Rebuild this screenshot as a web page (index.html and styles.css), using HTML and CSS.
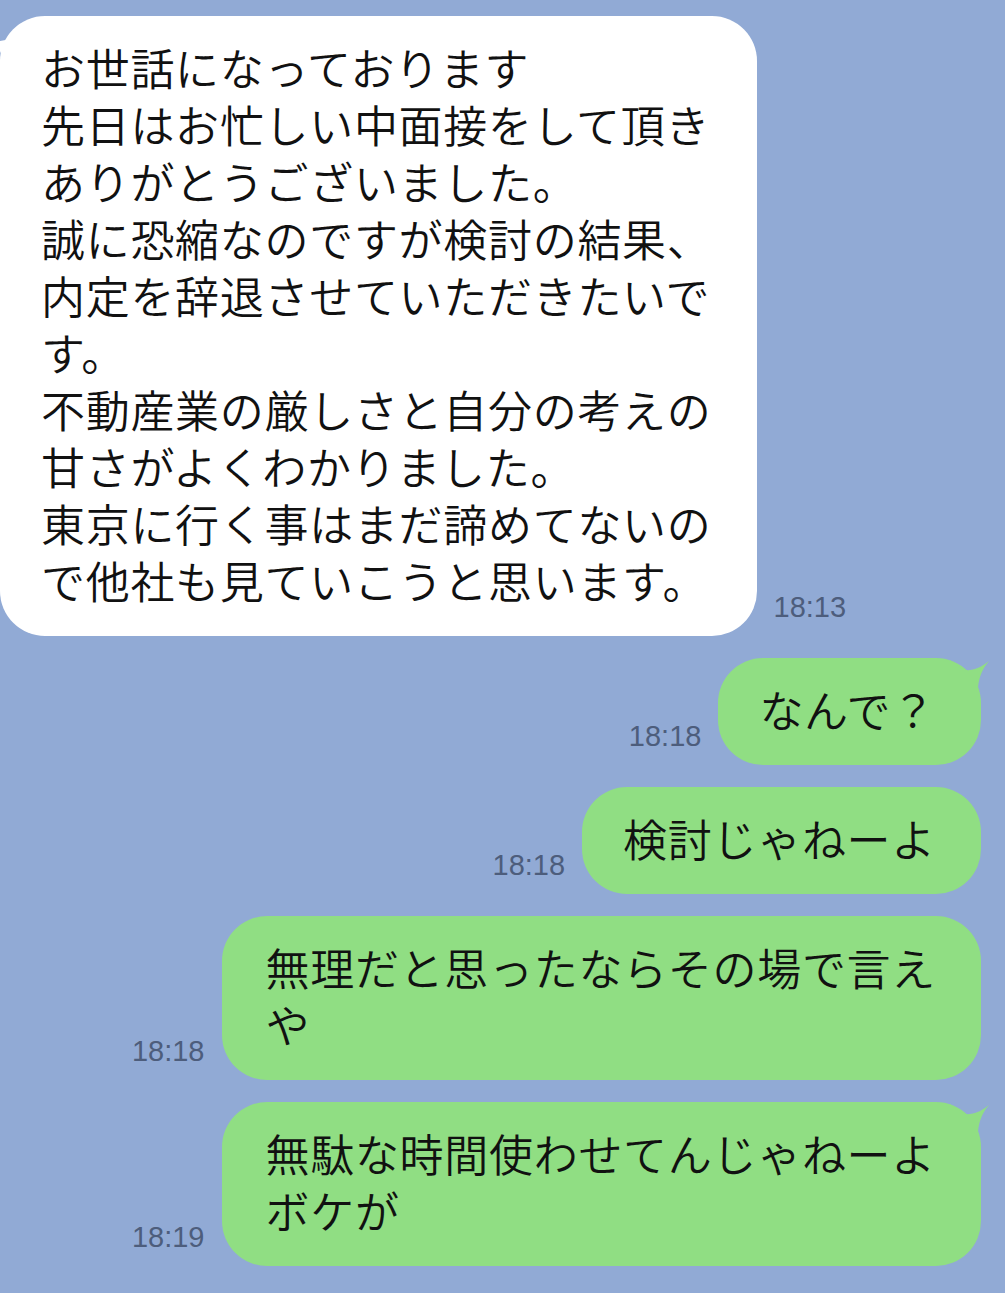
FILE: index.html
```html
<!DOCTYPE html>
<html lang="ja">
<head>
  <meta charset="UTF-8" />
  <meta name="viewport" content="width=device-width, initial-scale=1.0" />
  <title>トーク</title>
  <link rel="stylesheet" href="styles.css">
</head>
<body>
  <div class="chat">

    <!-- received -->
    <div class="row in">
      <div class="bubble white">
        <svg class="tail tail-left" width="60" height="60" viewBox="0 0 60 60">
          <path d="M55,16 Q30,16 20,22 Q12,27 2,24 Q10,32 13.3,44 L55,44 Z" fill="#ffffff" />
        </svg>
        お世話になっております<br>
        先日はお忙しい中面接をして頂き<br>
        ありがとうございました。<br>
        誠に恐縮なのですが検討の結果、<br>
        内定を辞退させていただきたいで<br>
        す。<br>
        不動産業の厳しさと自分の考えの<br>
        甘さがよくわかりました。<br>
        東京に行く事はまだ諦めてないの<br>
        で他社も見ていこうと思います。
      </div>
      <span class="time">18:13</span>
    </div>

    <!-- sent -->
    <div class="row out">
      <span class="time">18:18</span>
      <div class="bubble green">
        なんで？
        <svg class="tail tail-right" width="40" height="40" viewBox="0 0 40 40">
          <path d="M0,2 C8,8 14,13 20,12 C28,11 34,7 39,3 C33,10 29,18 28,30 L0,30 Z" fill="#90de83" />
        </svg>
      </div>
    </div>

    <div class="row out">
      <span class="time">18:18</span>
      <div class="bubble green">検討じゃねーよ</div>
    </div>

    <div class="row out">
      <span class="time">18:18</span>
      <div class="bubble green wide">無理だと思ったならその場で言え<br>や</div>
    </div>

    <div class="row out">
      <span class="time">18:19</span>
      <div class="bubble green wide">
        無駄な時間使わせてんじゃねーよ<br>ボケが
        <svg class="tail tail-right" width="40" height="40" viewBox="0 0 40 40">
          <path d="M0,2 C8,8 14,13 20,12 C28,11 34,7 39,3 C33,10 29,18 28,30 L0,30 Z" fill="#90de83" />
        </svg>
      </div>
    </div>

  </div>
</body>
</html>
```

FILE: styles.css
```css
body {
  margin: 0;
  padding: 0;
  background-color: #91aad5;
  font-family: "Noto Sans CJK JP", "Noto Sans", sans-serif;
  color: #111111;
  min-height: 100vh;
  overflow: hidden;
}

.chat {
  display: flex;
  flex-direction: column;
  gap: 22px;
  padding-top: 16px;
}

.row {
  display: flex;
  align-items: flex-end;
  gap: 17px;
}

.row.out {
  justify-content: flex-end;
  padding-right: 24px;
}

.bubble {
  position: relative;
  font-size: 44px;
  font-weight: 350;
  line-height: 57px;
  letter-spacing: 0.7px;
  padding: 23px 45px 27px 41px;
  border-radius: 45px;
  white-space: nowrap;
}

.bubble.white {
  background-color: #ffffff;
}

.bubble.green {
  background-color: #90de83;
}

.bubble.wide {
  padding-left: 44px;
}

.tail {
  position: absolute;
  top: 0;
  display: block;
}

.tail-right {
  right: -9px;
}

.tail-left {
  left: -10px;
}

.time {
  font-family: "Liberation Sans", Arial, sans-serif;
  font-size: 29px;
  line-height: 1;
  color: #4d5d7c;
  margin-bottom: 14px;
  white-space: nowrap;
}
```
